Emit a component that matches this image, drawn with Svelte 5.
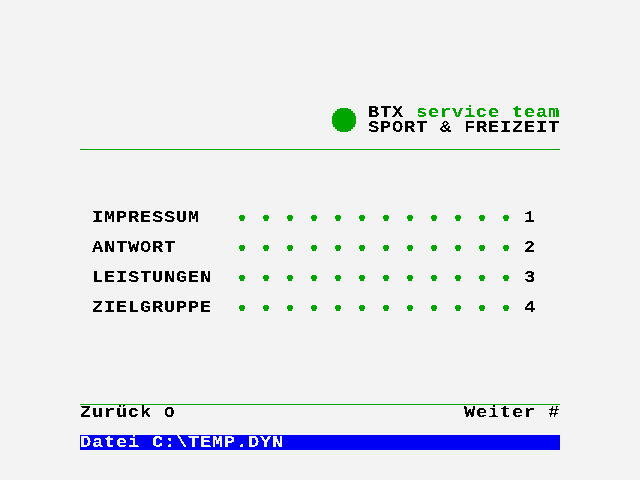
<script>
  const entries = [
    ['IMPRESSUM', '1'],
    ['ANTWORT', '2'],
    ['LEISTUNGEN', '3'],
    ['ZIELGRUPPE', '4'],
  ];
</script>

{#snippet cells(text, tone = '')}
  <span class="cells {tone}" style:width="{text.length * 12}px"><span class="glyphs">{text}</span></span>
{/snippet}

<svg class="defs" aria-hidden="true">
  <filter id="crisp" x="-2" y="-4" width="1000" height="24" filterUnits="userSpaceOnUse" color-interpolation-filters="sRGB">
    <feComponentTransfer><feFuncA type="discrete" tableValues="0 0 1 1" /></feComponentTransfer>
  </filter>
</svg>

<main>
  <header>
    <svg class="disc" width="24" height="24" viewBox="0 0 24 24" shape-rendering="crispEdges">
      <path d="M8 0h8v1h3v2h2v2h2v3h1v8h-1v3h-2v2h-2v2h-3v1H8v-1H5v-2H3v-2H1v-3H0V8h1V5h2V3h2V1h3z" />
    </svg>
    <div class="title">
      <div class="line">{@render cells('BTX ')}{@render cells('service team', 'green')}</div>
      <div class="line">{@render cells('SPORT & FREIZEIT')}</div>
    </div>
  </header>
  <nav>
    {#each entries as [name, key]}
      <div class="entry">
        <div class="name">{@render cells(name)}</div>
        <div class="dots">
          {#each Array(12) as _}
            <svg width="6" height="6" viewBox="0 0 6 6" shape-rendering="crispEdges"><path d="M1 0h4v1h1v3H5v2H1V4H0V1h1z" /></svg>
          {/each}
        </div>
        {@render cells(key)}
      </div>
    {/each}
  </nav>
  <footer>
    <div class="back">{@render cells('Zurück ')}<span class="zero"><span>0</span></span></div>
    {@render cells('Weiter #')}
  </footer>
  <div class="status">{@render cells('Datei C:\\TEMP.DYN')}</div>
</main>

<style>
  :global(body) { background: #f3f3f3; }
  .defs { display: block; width: 0; height: 0; }
  main {
    box-sizing: border-box;
    width: 640px;
    height: 480px;
    padding: 105px 80px 30px;
    display: flex;
    flex-direction: column;
    background: #f3f3f3;
    color: #000;
    font: bold 15px/15px 'Liberation Mono', monospace;
    overflow: hidden;
  }
  header {
    display: flex;
    justify-content: flex-end;
    gap: 12px;
    height: 44px;
    border-bottom: 1px solid #00a500;
  }
  svg { fill: #00a500; display: block; flex: none; }
  .disc { margin-top: 3px; }
  .title { width: 192px; }
  .line { display: flex; height: 15px; }
  .cells { display: block; height: 15px; flex: none; white-space: pre; filter: url(#crisp); }
  .glyphs { display: block; width: max-content; letter-spacing: 0.6px; transform: translateY(1px) scale(1.25, 1.14); transform-origin: 0 11px; }
  .green { color: #00a500; }
  nav { padding: 60px 24px 0 12px; display: flex; flex-direction: column; gap: 15px; }
  .entry { display: flex; height: 15px; }
  .name { width: 147px; }
  .dots { display: flex; gap: 18px; padding-top: 5px; margin-right: 15px; }
  footer {
    display: flex;
    justify-content: space-between;
    height: 15px;
    margin-top: auto;
    border-top: 1px solid #00a500;
  }
  .back { display: flex; }
  .zero { display: block; width: 12px; height: 15px; filter: url(#crisp); }
  .zero span {
    display: block;
    width: max-content;
    font: bold 14px/15px 'Liberation Sans', sans-serif;
    transform: scaleX(1.35);
    transform-origin: 0 0;
  }
  .status { margin-top: 15px; height: 15px; background: #0000f3; color: #f3f3f3; }
</style>
